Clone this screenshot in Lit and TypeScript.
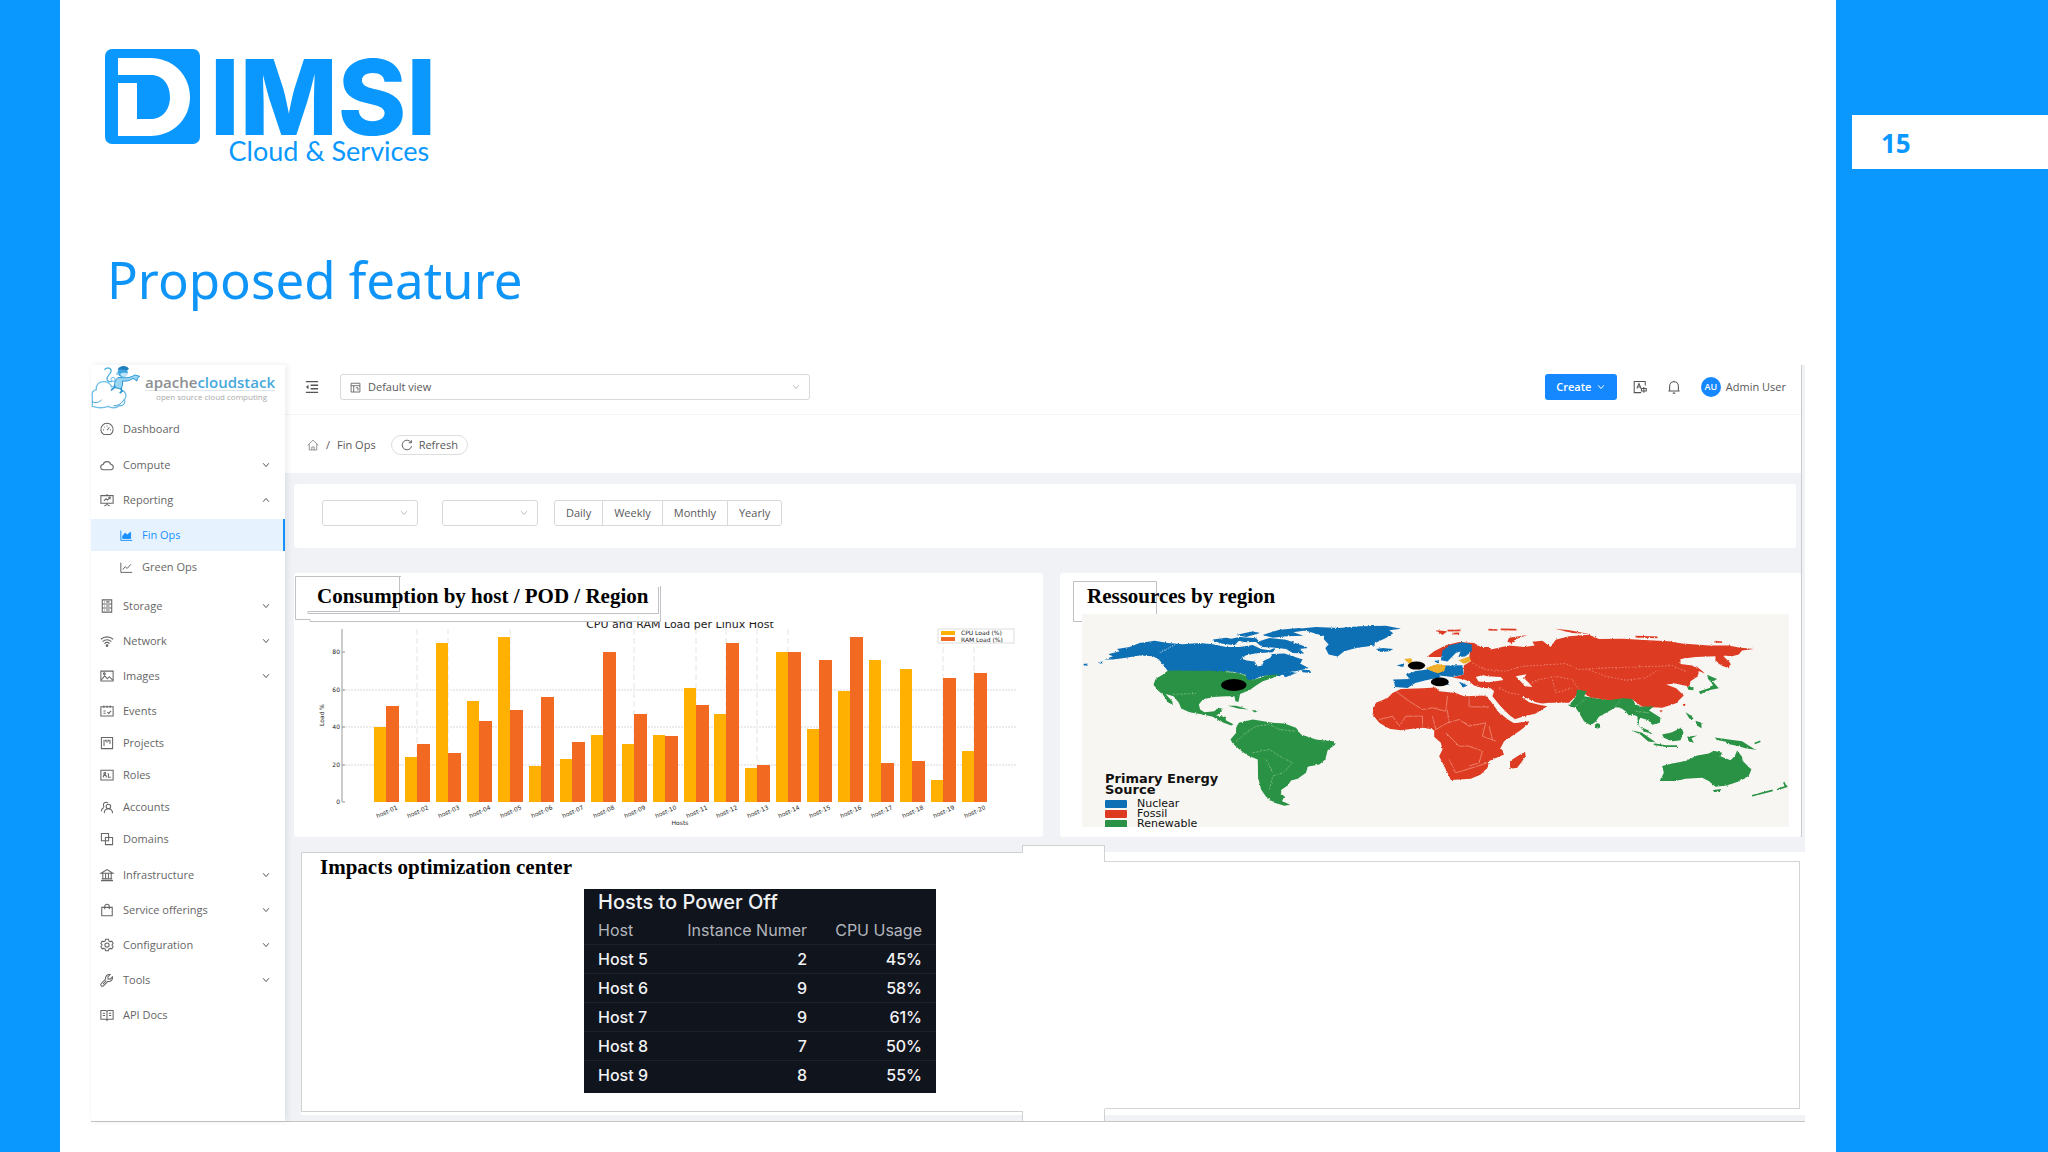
import { LitElement, html, svg, css, nothing } from "lit";
import { customElement, property } from "lit/decorators.js";

/* 16 x 16 outline icons, drawn with currentColor strokes. */
const ICONS: Record<string, unknown> = {
  dashboard: svg`<path d="M4 14.2A7 7 0 1 1 12 14.2Z"/><path d="M8 9.4 10.8 6M3.6 9h1M11.4 9h1M8 4v1M4.9 5.6l.6.6"/>`,
  cloud: svg`<path d="M4 13.4A3 3 0 0 1 3.6 7.4 4.6 4.6 0 0 1 12.4 7.4 3 3 0 0 1 12 13.4Z"/>`,
  reporting: svg`<path d="M1 3h14v8.6H1ZM8 1v2M8 11.6v1.6M5 15l3-2 3 2"/><path d="M4.4 9 7 6.6l1.6 1.4 3-3M9.6 5h2v2"/>`,
  area: svg`<path d="M1 2v12h14"/><path d="M3.4 11.6V8.6L6.4 5l2.4 2.4L13 4v7.6Z" fill="currentColor"/>`,
  line: svg`<path d="M1 2v12h14M3.4 10.6 6.4 7l2.4 2.2L13.4 4"/>`,
  storage: svg`<path d="M2.6 1h10.8v14H2.6ZM2.6 5.6h10.8M2.6 10.2h10.8M7 3.3h4M7 7.9h4M7 12.6h4M4.6 3.3h.8M4.6 7.9h.8M4.6 12.6h.8"/>`,
  network: svg`<path d="M1 6a10.4 10.4 0 0 1 14 0M3 8.6a7.4 7.4 0 0 1 10 0M5 11a4.4 4.4 0 0 1 6 0"/><circle cx="8" cy="13.2" r="1" fill="currentColor"/>`,
  images: svg`<path d="M1 2.4h14v11.4H1Z"/><path d="m1.4 12.4 4-4.6 3 3.4 2.2-2.4 4 3.8"/><circle cx="5" cy="5.4" r="1"/>`,
  events: svg`<path d="M1 3.2h14v10.6H1ZM4.4 1.8v2.8M11.6 1.8v2.8M8 1.8v2.8"/><path d="M4 8h2.4M4 10.6h2.4M8.4 9.2 10 10.8l2.6-3"/>`,
  projects: svg`<path d="M1.6 1.6h12.8v12.8H1.6Z"/><path d="M4.6 4.4v7M8 4.4v3.2M11.4 4.4v4.6M6.4 4.4v2M9.8 4.4v2"/>`,
  roles: svg`<path d="M1 2.6h14v11H1Z"/><path d="M3.8 10.8v-1.4c0-1.6 3.4-1.6 3.4 0v1.4M9.6 6v4.6h2.6"/><circle cx="5.5" cy="6.4" r="1.1"/>`,
  accounts: svg`<path d="M1.4 13c.2-2.4 1.4-3.8 3-4.4M9.2 3.4A3 3 0 1 0 4.8 8"/><circle cx="9.6" cy="7.4" r="2.6"/><path d="M4.8 15c.2-3 2.2-5 4.8-5s4.6 2 4.8 5"/>`,
  domains: svg`<path d="M1.6 1.8h8.2V10H1.6Z"/><path d="M6.2 6.2h8.2v8.2H6.2Z"/>`,
  infra: svg`<path d="M1.2 6 8 1.8 14.8 6ZM1.2 14.4h13.6M2 12.4h12M3.2 6v6.4M6.4 6v6.4M9.6 6v6.4M12.8 6v6.4"/>`,
  bag: svg`<path d="M2 5h12v9.6H2Z"/><path d="M5.4 7V4a2.6 2.6 0 0 1 5.2 0v3"/>`,
  gear: svg`<path d="M6.4 1.4h3.2l.5 1.9 1.5.8 1.9-.5 1.5 2.7L13.6 8l1.4 1.7-1.5 2.7-1.9-.5-1.5.8-.5 1.9H6.4l-.5-1.9-1.5-.8-1.9.5L1 9.7 2.4 8 1 6.3l1.5-2.7 1.9.5 1.5-.8Z"/><circle cx="8" cy="8" r="2.4"/>`,
  tool: svg`<path d="M14.2 4.4 11.6 7 9.2 6.8 9 4.4l2.6-2.6A4.2 4.2 0 0 0 6.4 7L1.4 12a1.8 1.8 0 0 0 2.6 2.6L9 9.6a4.2 4.2 0 0 0 5.2-5.2Z"/><path d="m3.4 12.6 3.8-3.8"/>`,
  docs: svg`<path d="M1 2.8h5.6L8 4l1.4-1.2H15v10H9.6L8 14l-1.6-1.2H1ZM8 4v9.6M3.2 6h2.6M3.2 8.6h2.6M10.2 6h2.6M10.2 8.6h2.6"/>`,
  fold: svg`<path d="M1 1.8h14M6.4 6h8.6M6.4 10h8.6M1 14.2h14" stroke-width="1.5"/><path d="M4 5.4v5.2L1 8Z" fill="currentColor" stroke="none"/>`,
  view: svg`<path d="M1.6 1.8h12.8v12.8H1.6ZM1.6 5.4h12.8M5.4 5.4v9.2M8.6 8.4h3v4"/>`,
  home: svg`<path d="M1 8.4 8 1.6l7 6.8M3 7v7.6h10V7M6.4 14.6v-4h3.2v4"/>`,
  reload: svg`<path d="M13.4 4.6A6.4 6.4 0 1 0 14.2 9.6M13.8 1.6v3.4h-3.4" stroke-width="1.3"/>`,
  lang: svg`<path d="M14 6.4V1.6H1.4v12.8h8M4.4 9.8 6.8 4l2.4 5.8M5.2 8h3.2"/><path d="M12.4 8v6.6M9.6 9.6h5.6v3H9.6Z"/>`,
  bell: svg`<path d="M3 12.6V7a5 5 0 0 1 10 0v5.6M1.6 12.6h12.8M6.6 15h2.8M8 .8V2"/>`,
  down: svg`<path d="m2.4 4.6 5.6 6.6 5.6-6.6" stroke-width="2"/>`,
  up: svg`<path d="m2.4 11.4 5.6-6.6 5.6 6.6" stroke-width="2"/>`,
};

@customElement("line-icon")
export class LineIcon extends LitElement {
  @property() name = "";
  static styles = css`
    :host { display: inline-flex; width: 14px; height: 14px; flex: none; }
    .glyph { width: 100%; height: 100%; fill: none; stroke: currentColor; stroke-width: 1.2; overflow: visible; }
  `;
  render() {
    return html`<svg class="glyph" viewBox="0 0 16 16" aria-hidden="true">${ICONS[this.name]}</svg>`;
  }
}

interface NavEntry {
  label: string;
  icon: string;
  group?: boolean;
  children?: { label: string; icon: string; active?: boolean }[];
}

const NAV: NavEntry[] = [
  { label: "Dashboard", icon: "dashboard" },
  { label: "Compute", icon: "cloud", group: true },
  {
    label: "Reporting", icon: "reporting", group: true,
    children: [
      { label: "Fin Ops", icon: "area", active: true },
      { label: "Green Ops", icon: "line" },
    ],
  },
  { label: "Storage", icon: "storage", group: true },
  { label: "Network", icon: "network", group: true },
  { label: "Images", icon: "images", group: true },
  { label: "Events", icon: "events" },
  { label: "Projects", icon: "projects" },
  { label: "Roles", icon: "roles" },
  { label: "Accounts", icon: "accounts" },
  { label: "Domains", icon: "domains" },
  { label: "Infrastructure", icon: "infra", group: true },
  { label: "Service offerings", icon: "bag", group: true },
  { label: "Configuration", icon: "gear", group: true },
  { label: "Tools", icon: "tool", group: true },
  { label: "API Docs", icon: "docs" },
];

@customElement("side-nav")
export class SideNav extends LitElement {
  static styles = css`
    :host { display: block; background: #fff; font: 11px/16px "Open Sans", sans-serif; color: #666;
      box-shadow: 2px 0 6px rgba(0, 30, 60, 0.09); position: relative; }
    .brand { display: flex; gap: 4px; height: 48px; }
    .mascot { width: 50px; height: 44px; flex: none; }
    .words { display: flex; flex-direction: column; align-items: flex-end; padding-top: 9px; }
    .name { font: 600 15px/16px "Open Sans", sans-serif; color: #8b8f92; border-bottom: 1px solid #dfe5e8; }
    .stack { color: #48a9dc; }
    .motto { font-size: 8px; line-height: 11px; color: #a9a9a9; padding-right: 8px; white-space: nowrap; }
    .list { list-style: none; margin: 0; padding: 0; }
    .item { display: flex; align-items: center; gap: 9px; width: 100%; height: 32px; box-sizing: border-box;
      padding: 0 15px 0 9px; border: 0; background: none; color: inherit; font: inherit; text-align: left;
      text-decoration: none; }
    .group > .item { height: 35px; }
    .leaf + .group, .group + .leaf { margin-top: 2px; }
    .label { flex: 1; }
    .caret { width: 8px; height: 8px; color: #555; }
    .sub { padding: 2px 0 5px; }
    .sub .item { padding-left: 29px; }
    .sub .item.active { background: #e6f3ff; color: #1890ff; border-right: 2px solid #1890ff; }
    .sub line-icon { width: 13px; height: 13px; }
  `;

  private entry(e: NavEntry) {
    if (!e.group) {
      return html`<li class="leaf"><a class="item" href="#"><line-icon name=${e.icon}></line-icon><span class="label">${e.label}</span></a></li>`;
    }
    const open = !!e.children;
    return html`<li class="group">
      <button class="item" type="button" aria-expanded=${open ? "true" : "false"}>
        <line-icon name=${e.icon}></line-icon><span class="label">${e.label}</span>
        <line-icon class="caret" name=${open ? "up" : "down"}></line-icon>
      </button>
      ${e.children
        ? html`<ul class="list sub">${e.children.map((c) => html`<li>
            <a class="item ${c.active ? "active" : ""}" href="#"><line-icon name=${c.icon}></line-icon><span class="label">${c.label}</span></a>
          </li>`)}</ul>`
        : nothing}
    </li>`;
  }

  render() {
    return html`
      <div class="brand">
        <svg class="mascot" viewBox="30 30 150 132" fill="none" aria-hidden="true">
          <path d="M34 122C32 112 38 106 46 104 44 90 54 80 68 80 80 80 88 86 92 96 102 90 118 94 122 106 136 108 138 126 130 134 134 146 126 154 114 152 106 160 90 160 82 154 66 160 46 158 34 154Z" fill="#fff" stroke="#6fbfe8" stroke-width="4"/>
          <path d="M34 140c10 6 22 2 28-6M98 152c16 0 26-8 30-18" stroke="#3f9fd6" stroke-width="3"/>
          <path d="M70 44c8-8 22-6 20 6-2 8-12 12-12 22 0 8 10 10 18 6" stroke="#4fb0e2" stroke-width="4"/>
          <circle cx="96" cy="73" r="6" fill="#fff" stroke="#6cbfe8" stroke-width="3"/>
          <path d="M110 68c-8 8-12 18-8 30l18 4c4-8 6-16 4-24 12 2 24-2 32-8l12 8 1-8 7-6-14-4c-10 6-24 10-34 8Z" fill="#9ad6f4" stroke="#2f97d4" stroke-width="3"/>
          <path d="M104 94l-14 12M118 100l6 8-8 6" stroke="#2f97d4" stroke-width="5"/>
          <circle cx="125" cy="52" r="15" fill="#41a6df"/>
          <path d="M110 44c4-12 26-16 34-2l-6 4c-8-4-18-2-28-2Z" fill="#1f7fbd"/>
          <path d="M118 56c6-4 18-4 22 0-1 7-8 10-13 9-5-1-8-4-9-9Z" fill="#bfe6fa"/>
          <circle cx="109" cy="56" r="4" fill="#8fd0f2"/>
        </svg>
        <div class="words">
          <div class="name">apache<span class="stack">cloudstack</span></div>
          <div class="motto">open source cloud computing</div>
        </div>
      </div>
      <nav aria-label="Main"><ul class="list">${NAV.map((e) => this.entry(e))}</ul></nav>
    `;
  }
}

/* CPU and RAM load of each host, in percent. */
const LOAD: [number, number][] = [
  [40, 51], [24, 31], [85, 26], [54, 43], [88, 49], [19, 56], [23, 32], [36, 80], [31, 47], [36, 35],
  [61, 52], [47, 85], [18, 20], [80, 80], [39, 76], [59, 88], [76, 21], [71, 22], [12, 66], [27, 69],
];

@customElement("load-chart")
export class LoadChart extends LitElement {
  static styles = css`
    :host { display: block; }
    .chart { display: block; width: 100%; height: auto; font-family: "DejaVu Sans", sans-serif; fill: #222; }
    .title { font-size: 11px; text-anchor: middle; }
    .small { font-size: 6px; }
    .end { text-anchor: end; }
    .mid { text-anchor: middle; }
    .cpu { fill: #ffb000; }
    .ram { fill: #f26a21; }
    .axis { stroke: #999; }
    .grid { stroke: #d9d9d9; stroke-dasharray: 2 1; }
    .vgrid { stroke: #e4e4e4; stroke-dasharray: 6 3; }
    .box { fill: #fff; stroke: #ddd; }
  `;
  render() {
    const x = (i: number) => 92 + Math.round(i * 30.95);
    const y = (v: number) => 180 - Math.round(v * 1.873);
    return html`<svg class="chart" viewBox="0 0 749 215" role="img" aria-label="CPU and RAM Load per Linux Host">
      <text class="title" x="386" y="6">CPU and RAM Load per Linux Host</text>
      ${[20, 40, 60].map((v) => svg`<line class="grid" x1="48" x2="722" y1=${y(v)} y2=${y(v)}></line>`)}
      ${[1, 2, 4, 8, 10, 11, 12, 13, 18, 19].map((i) => svg`<line class="vgrid" x1=${x(i)} x2=${x(i)} y1="7" y2="180"></line>`)}
      <line class="axis" x1="48" x2="48" y1="7" y2="180"></line>
      ${[0, 20, 40, 60, 80].map((v) => svg`<line class="axis" x1="48" x2="51" y1=${y(v)} y2=${y(v)}></line>
        <text class="small end" x="46" y=${y(v) + 2}>${v}</text>`)}
      <text class="small mid" transform="translate(30 93) rotate(-90)">Load %</text>
      ${LOAD.map(([cpu, ram], i) => svg`
        <rect class="cpu" x=${x(i) - 12} width="12" y=${y(cpu)} height=${180 - y(cpu)}></rect>
        <rect class="ram" x=${x(i)} width="13" y=${y(ram)} height=${180 - y(ram)}></rect>
        <text class="small end" transform="translate(${x(i) + 12} 187) rotate(-24)">host-${String(i + 1).padStart(2, "0")}</text>`)}
      <text class="small mid" x="386" y="203">Hosts</text>
      <rect class="box" x="644" y="7" width="76" height="14"></rect>
      <rect class="cpu" x="647" y="9" width="14" height="4"></rect>
      <rect class="ram" x="647" y="15" width="14" height="4"></rect>
      <text class="small" x="667" y="13">CPU Load (%)</text>
      <text class="small" x="667" y="20">RAM Load (%)</text>
    </svg>`;
  }
}

@customElement("energy-map")
export class EnergyMap extends LitElement {
  static styles = css`
    :host { display: block; position: relative; background: #f8f6f2; overflow: hidden; }
    .map { display: block; width: 100%; height: auto; }
    .nuclear { fill: #0f6fb4; background: #0f6fb4; }
    .fossil { fill: #dd3a22; background: #dd3a22; }
    .renewable { fill: #2b9245; background: #2b9245; }
    .amber { fill: #eeb02c; }
    .sea { fill: #f8f6f2; }
    .border { fill: none; stroke: #f3a58f; stroke-width: 2; }
    .gborder { fill: none; stroke: #8cc795; stroke-width: 2; stroke-dasharray: 7 4; }
    .thin { fill: none; stroke-width: 5; }
    .gline { stroke: #2b9245; }
    .rline { stroke: #dd3a22; }
    .bline { stroke: #0f6fb4; }
    .legend { position: absolute; left: 23px; bottom: -2px; font: 11px/10px "DejaVu Sans", sans-serif; color: #111; }
    .heading { margin: 0 0 4px; font: bold 13px/11px "DejaVu Sans", sans-serif; }
    .keys { list-style: none; margin: 0; padding: 0; }
    .key { display: flex; align-items: center; gap: 10px; }
    .swatch { width: 22px; height: 8px; border-radius: 1px; }
  `;
  render() {
    return html`
      <svg class="map" viewBox="127 163 2124 640" role="img" aria-label="World map of primary energy source">
        <defs>
          <filter id="coast" x="0" y="0" width="100%" height="100%">
            <feTurbulence type="fractalNoise" baseFrequency="0.16" numOctaves="2" seed="4"></feTurbulence>
            <feDisplacementMap in="SourceGraphic" scale="7" xChannelSelector="R" yChannelSelector="G"></feDisplacementMap>
          </filter>
        </defs>
        <g filter="url(#coast)">
          <g class="nuclear">
            <path d="M195 300 220 290 205 284 240 275 232 268 270 262 300 250 345 243 385 250 430 254 480 250 520 254 560 262 600 262 640 256 665 268 690 272 712 262 700 278 650 281 620 287 605 297 622 303 645 306 655 321 668 318 675 302 692 295 700 283 735 282 760 290 790 300 782 312 808 325 770 335 740 337 720 350 700 346 665 350 640 362 620 362 618 345 560 334 385 334 372 318 358 300 340 290 300 288 255 295 220 300Z"/>
            <path d="M515 240 560 234 600 242 585 257 545 252ZM590 226 640 215 662 220 620 232ZM572 238 600 232 650 236 660 246 620 248ZM650 248 690 235 740 240 785 256 808 265 780 268 795 282 760 280 740 268 700 264 668 262ZM670 226 720 210 780 205 802 212 762 218 792 228 742 230 700 234Z"/>
            <path d="M770 208 830 202 900 205 960 200 1040 198 1085 207 1050 212 1062 221 1040 235 1008 250 1005 258 950 265 915 275 895 291 868 285 858 265 868 255 855 240 850 228 830 222 800 213Z"/>
            <path d="M1010 268 1030 265 1062 268 1050 275 1025 277ZM725 342 748 335 772 340 738 353ZM785 330 812 332 815 340 790 338ZM1072 318 1096 311 1092 322Z"/>
            <path d="M1062 360 1112 358 1100 345 1130 334 1165 330 1200 338 1215 318 1270 317 1274 345 1240 352 1200 348 1215 362 1232 378 1210 372 1190 356 1160 362 1128 370 1105 385 1068 382ZM1258 365 1285 378 1272 384ZM1185 305 1200 301 1198 312Z"/>
          </g>
          <g class="renewable">
            <path d="M385 333 560 334 618 345 622 358 640 362 680 348 720 343 700 355 670 365 650 378 630 392 602 403 597 427 588 425 585 410 560 410 520 412 490 420 478 435 482 450 495 458 525 455 535 445 550 448 542 460 530 468 557 472 560 483 582 494 575 498 545 487 520 472 490 465 450 458 425 447 418 430 402 410 378 403 398 425 400 436 385 428 370 405 355 393 342 375 348 358 370 345Z"/>
            <path d="M565 439 590 439 627 450 600 448ZM636 452 658 453 646 459ZM598 490 640 480 700 490 735 492 770 505 785 525 830 540 880 545 888 555 865 572 858 600 840 615 805 622 800 640 775 658 755 663 745 678 727 690 724 705 736 710 728 725 752 736 735 739 705 730 680 712 665 690 656 655 655 600 625 588 600 570 580 552 573 540 590 520 590 505Z"/>
          </g>
          <g class="fossil">
            <path d="M1002 450 1010 430 1045 415 1060 400 1085 388 1150 386 1190 384 1200 395 1250 400 1275 410 1340 408 1355 425 1380 460 1410 482 1425 491 1472 485 1460 500 1440 515 1395 545 1385 565 1395 585 1350 605 1345 625 1325 645 1295 658 1235 662 1225 640 1205 600 1200 590 1210 570 1205 550 1185 532 1185 510 1150 505 1120 508 1085 512 1050 508 1020 490 1000 465Z"/>
            <path d="M1458 577 1460 590 1435 625 1413 628 1413 605 1435 590Z"/>
            <path d="M1163 292 1185 275 1220 257 1260 247 1305 250 1325 262 1350 262 1355 270 1410 258 1455 262 1487 258 1480 246 1510 243 1535 262 1550 240 1590 230 1650 225 1680 238 1750 237 1830 242 1890 245 1930 252 2010 258 2070 258 2100 264 2145 268 2110 273 2100 285 2080 290 2052 288 2075 310 2070 326 2048 318 2030 305 2030 290 1970 292 1925 298 1925 313 1960 318 1980 330 1978 350 1955 365 1952 381 1930 376 1910 372 1882 375 1912 386 1935 408 1910 432 1870 445 1810 442 1780 420 1710 422 1655 414 1620 392 1610 410 1590 430 1530 430 1510 432 1490 428 1455 412 1448 412 1470 428 1500 436 1525 440 1490 462 1455 470 1425 480 1405 462 1380 435 1360 410 1365 395 1355 386 1330 385 1305 378 1290 365 1275 360 1240 354 1274 345 1274 318 1295 305 1290 296 1295 260 1265 252 1225 265 1205 292Z"/>
            <path d="M1405 246 1410 234 1465 226 1432 238 1420 251ZM1190 212 1225 215 1210 226ZM1548 207 1592 212 1650 223 1600 220ZM1970 318 1992 336 1998 342 1980 334ZM1930 434 1940 433 1938 442ZM1862 453 1872 452 1866 459Z"/>
          </g>
          <path class="sea" d="M1310 352 1330 346 1345 350 1385 352 1394 361 1350 368 1318 366ZM1430 350 1462 344 1455 356 1470 370 1480 382 1458 380 1445 366ZM1345 408 1360 412 1382 440 1412 468 1430 480 1415 480 1380 455Z"/>
          <g class="nuclear"><path d="M1205 302 1210 272 1230 258 1270 248 1298 255 1298 276 1278 291 1258 292 1264 276 1250 280 1238 292 1225 306Z"/></g>
          <path class="amber" d="M1095 298 1116 296 1122 312 1108 311ZM1160 325 1195 313 1220 318 1215 335 1195 341 1172 332ZM1258 302 1290 291 1296 304 1275 313Z"/>
          <g class="renewable">
            <path d="M1615 390 1642 395 1636 410 1670 416 1710 422 1750 416 1780 418 1790 435 1810 442 1845 441 1830 452 1865 475 1863 490 1840 496 1828 482 1805 475 1800 482 1800 500 1828 512 1842 525 1815 515 1798 495 1795 470 1780 465 1770 468 1760 455 1745 445 1730 443 1710 455 1680 472 1670 487 1655 497 1635 485 1620 460 1610 445 1588 440 1610 412Z"/>
            <circle cx="1676" cy="499" r="8"/>
            <path d="M1778 512 1810 520 1850 548 1828 546 1805 526ZM1870 525 1900 518 1928 504 1934 520 1925 542 1900 545 1875 535ZM1945 532 1975 528 1958 536 1965 550 1950 546ZM1940 458 1956 468 1966 480 1952 478ZM1970 484 1988 490 1988 506 1974 498ZM2005 345 2015 350 2035 358 2022 366 2040 386 2010 392 1985 404 1980 396 2010 386 2022 374 2008 358ZM1945 380 1965 384 1962 392 1948 390ZM2028 534 2070 540 2110 545 2150 571 2120 566 2100 560 2065 553 2060 546 2035 542Z"/>
            <path d="M1870 620 1900 612 1940 605 1975 588 2010 582 2025 574 2050 580 2045 590 2075 602 2088 590 2095 573 2110 592 2112 605 2138 630 2130 650 2095 668 2065 678 2030 682 2010 665 1990 655 1940 658 1910 665 1863 665 1875 640ZM2022 692 2048 689 2042 697 2026 698Z"/>
          </g>
          <path class="thin gline" d="M1845 554 1880 560 1915 560M2140 709 2202 693M2215 690 2246 680M2235 668 2242 682M2148 552 2165 545"/>
          <path class="thin rline" d="M1348 210 1375 211M1385 209 1432 210M1790 231 1856 233M2030 246 2050 248M1225 213 1264 212M1240 222 1260 221"/>
          <path class="thin bline" d="M132 315 145 315M180 310 190 308"/>
          <path class="gborder" d="M590 545 620 520 650 500 690 495 720 510 770 515M640 580 690 570 720 590 760 610 730 640 700 650 690 690M680 600 700 640M400 404 470 402M1610 440 1640 420M1730 440 1745 420M1790 455 1830 460"/>
          <path class="border" d="M1070 395 1110 425 1150 450 1180 445 1220 455 1225 410M1290 410 1290 442 1350 442M1020 480 1060 470 1080 500 1100 470 1150 470 1150 500M1180 470 1190 510 1225 490 1260 480 1290 500 1340 490M1225 455 1230 490M1340 490 1330 530 1370 545M1220 520 1260 560 1290 560 1330 575 1320 610 1290 620M1230 600 1250 640 1300 625 1345 610M1350 500 1360 540"/>
          <path class="border" stroke-dasharray="5 5" d="M1300 310 1340 330 1400 335 1450 320 1530 315 1580 312 1620 330 1700 325 1790 322 1860 320 1900 318 1940 335M1650 330 1700 350 1760 362 1820 355 1860 330M1460 380 1500 360 1550 350 1600 360 1620 390M1540 360 1550 400 1600 385M1380 385 1410 400 1440 405"/>
          <path fill="none" stroke="#dfe8ef" stroke-width="2" stroke-dasharray="4 3" d="M360 280 410 253M560 337 600 340 620 350"/>
        </g>
        <ellipse cx="583" cy="376" rx="38" ry="18"></ellipse>
        <ellipse cx="1132" cy="318" rx="26" ry="12"></ellipse>
        <ellipse cx="1202" cy="367" rx="27" ry="13"></ellipse>
      </svg>
      <div class="legend">
        <p class="heading">Primary Energy<br />Source</p>
        <ul class="keys">
          <li class="key"><span class="swatch nuclear"></span>Nuclear</li>
          <li class="key"><span class="swatch fossil"></span>Fossil</li>
          <li class="key"><span class="swatch renewable"></span>Renewable</li>
        </ul>
      </div>`;
  }
}

const HOSTS: [string, number, string][] = [
  ["Host 5", 2, "45%"], ["Host 6", 9, "58%"], ["Host 7", 9, "61%"], ["Host 8", 7, "50%"], ["Host 9", 8, "55%"],
];

@customElement("host-table")
export class HostTable extends LitElement {
  static styles = css`
    :host { display: block; width: 352px; box-sizing: border-box; padding-bottom: 4px; background: #10141d;
      color: #f1f2f4; font: 16px/28px Inter, sans-serif; }
    .hosts { width: 100%; border-collapse: collapse; }
    .caption { text-align: left; padding: 0 14px; font: 500 20px/27px Inter, sans-serif; }
    .cell { padding: 0 0 0 14px; text-align: left; font-weight: 500; border-top: 1px solid #1c222c; height: 28px; }
    .cell.num { text-align: right; padding: 0 14px 0 0; }
    .cell.last { width: 101px; }
    .cell.head { color: #b3b6bc; font-weight: 400; border-top: 0; }
  `;
  render() {
    return html`<table class="hosts">
      <caption class="caption">Hosts to Power Off</caption>
      <thead><tr>
        <th class="cell head" scope="col">Host</th>
        <th class="cell head num" scope="col">Instance Numer</th>
        <th class="cell head num last" scope="col">CPU Usage</th>
      </tr></thead>
      <tbody>${HOSTS.map(([h, n, c]) => html`<tr>
        <td class="cell">${h}</td><td class="cell num">${n}</td><td class="cell num">${c}</td>
      </tr>`)}</tbody>
    </table>`;
  }
}

@customElement("app-root")
export class AppRoot extends LitElement {
  static styles = css`
    :host { display: block; font: 11px/16px "Open Sans", sans-serif; color: #595959; }
    .slide { display: flex; min-height: 100vh; background: #fff; }
    .edge { width: 60px; flex: none; background: #0a98ff; }
    .right { width: 212px; flex: none; background: #0a98ff; padding-top: 115px; box-sizing: border-box; }
    .page { margin-left: 16px; padding: 2px 0 0 29px; background: #fff; color: #0a98ff;
      font: bold 26px/52px "Noto Sans", sans-serif; }
    .main { flex: 1; min-width: 0; padding: 49px 31px 30px; }

    .logo { display: flex; gap: 10px; height: 120px; padding-left: 14px; color: #0a98ff; }
    .mark { width: 95px; height: 95px; }
    .wordmark { display: flex; flex-direction: column; align-items: flex-end; padding-top: 4px; }
    .big { font: 800 104px/88px Inter, sans-serif; }
    .tagline { font: 27px/20px Lato, sans-serif; padding-right: 7px; }
    .title { margin: 80px 0 56px 16px; font: 51px/60px "Noto Sans", sans-serif; color: #0f95f7; }

    .shot { display: grid; grid-template-columns: 194px 1fr; border-bottom: 1px solid #c4c6c8; }
    .body { min-width: 0; background: #f0f2f5; }
    .upper { margin-right: 3px; border-right: 1px solid #c9cbcf; }
    .top { display: flex; align-items: center; height: 44px; padding: 0 15px 5px 20px; background: #fff;
      border-bottom: 1px solid #f3f3f3; }
    .flat { display: inline-flex; padding: 0; border: 0; background: none; color: #555; }
    .picker { display: flex; position: relative; align-items: center; }
    .select { appearance: none; width: 96px; height: 26px; box-sizing: border-box; border: 1px solid #d9d9d9;
      border-radius: 3px; background: #fff; color: #595959; font: inherit; }
    .view { width: 470px; margin-left: 21px; }
    .view .select { width: 100%; padding-left: 27px; }
    .lead { position: absolute; left: 10px; width: 11px; height: 11px; pointer-events: none; }
    .drop { position: absolute; right: 10px; width: 8px; height: 8px; color: #bbb; pointer-events: none; }
    .actions { display: flex; align-items: center; margin-left: auto; gap: 20px; }
    .create { display: flex; align-items: center; justify-content: center; gap: 6px; width: 72px; height: 26px;
      padding: 0; border: 0; border-radius: 3px; background: #1588ff; color: #fff; font: 600 11px/16px "Open Sans", sans-serif; margin-right: -4px; }
    .tiny { width: 8px; height: 8px; }
    .user { display: flex; align-items: center; gap: 5px; color: inherit; text-decoration: none; }
    .avatar { width: 20px; border-radius: 50%; background: #1588ff; color: #fff; text-align: center;
      font: 600 9px/20px "Open Sans", sans-serif; }
    .crumbs { display: flex; align-items: center; height: 56px; padding: 2px 0 0 22px; gap: 7px; background: #fff; }
    .crumbs .here { margin-right: 8px; }
    .crumbs line-icon { width: 12px; height: 12px; }
    .homelink { display: inline-flex; color: #888; }
    .refresh { display: flex; align-items: center; gap: 6px; height: 20px; padding: 0 9px; border: 1px solid #ddd;
      border-radius: 10px; background: #fff; color: #595959; font: inherit; }
    .filters { display: flex; align-items: center; gap: 24px; height: 64px; margin: 11px 5px 25px 9px; padding: 0 28px;
      box-sizing: border-box; background: #fff; border-radius: 3px; padding-bottom: 7px; }
    .periods { display: flex; margin-left: -8px; }
    .period { height: 26px; padding: 0 11px; margin-right: -1px; border: 1px solid #d9d9d9; background: #fff;
      color: #595959; font: inherit; }
    .period:first-child { border-radius: 3px 0 0 3px; }
    .period:last-child { border-radius: 0 3px 3px 0; }
    .cards { display: grid; grid-template-columns: 749fr 741fr; gap: 17px; padding-left: 9px; }
    .card { position: relative; height: 264px; box-sizing: border-box; background: #fff; border-radius: 3px; overflow: hidden; }
    .outline { position: absolute; left: 1px; top: 0; width: 400px; height: 60px; fill: none; stroke: #bfc1c4; }
    .heading { position: relative; margin: 0; padding-left: 23px; color: #000;
      font: bold 21px/24px "Liberation Serif", serif; }
    .card .heading { padding-top: 11px; }
    .plot { margin-top: 14px; }
    .world { margin: 6px 12px 0 22px; }
    .regions .heading { padding-left: 27px; }

    .lower { display: grid; grid-template-columns: 721fr 83px 695fr; padding: 8px 5px 0 16px; }
    .impact { margin: 7px 0 9px; border: 1px solid #cfd1d3; border-right: 0; background: #fff; height: 260px; padding-top: 2px;
      box-sizing: border-box; box-shadow: 0 3px #fff; }
    .impact .heading { padding-left: 18px; margin-bottom: 10px; }
    .hostbox { margin-left: 282px; }
    .bridge { border-top: 1px solid #cfd1d3; background:
      linear-gradient(#cfd1d3, #cfd1d3) 0 0 / 1px 7px no-repeat,
      linear-gradient(#cfd1d3, #cfd1d3) 0 100% / 1px 10px no-repeat,
      linear-gradient(#cfd1d3, #cfd1d3) 100% 0 / 1px 16px no-repeat,
      linear-gradient(#cfd1d3, #cfd1d3) 100% 100% / 1px 12px no-repeat, #fff; }
    .rest { margin: 7px 0 6px; padding: 9px 0 6px; background: #fff; box-shadow: 5px 0 #fff; }
    .restbox { height: 100%; box-sizing: border-box; border: 1px solid #d3d5d7; border-left: 0; }
  `;

  render() {
    return html`
      <div class="slide">
        <div class="edge"></div>
        <main class="main">
          <div class="logo">
            <svg class="mark" viewBox="0 0 95 95" aria-hidden="true">
              <rect width="95" height="95" rx="7" fill="#0a98ff"></rect>
              <path fill="#fff" d="M13 9H45C68 9 85 26 85 48S68 87 45 87H13V34H32V70H46C58 70 65 60 65 48S58 26 46 26H13Z"></path>
            </svg>
            <div class="wordmark"><div class="big">IMSI</div><div class="tagline">Cloud &amp; Services</div></div>
          </div>
          <h1 class="title">Proposed feature</h1>
          <div class="shot">
            <side-nav></side-nav>
            <div class="body">
              <div class="upper">
                <div class="top">
                  <button class="flat" type="button" aria-label="Collapse menu"><line-icon name="fold"></line-icon></button>
                  <div class="picker view">
                    <line-icon class="lead" name="view"></line-icon>
                    <select class="select" aria-label="View"><option>Default view</option></select>
                    <line-icon class="drop" name="down"></line-icon>
                  </div>
                  <div class="actions">
                    <button class="create" type="button">Create <line-icon class="tiny" name="down"></line-icon></button>
                    <button class="flat" type="button" aria-label="Language"><line-icon name="lang"></line-icon></button>
                    <button class="flat" type="button" aria-label="Notifications"><line-icon name="bell"></line-icon></button>
                    <a class="user" href="#"><span class="avatar">AU</span>Admin User</a>
                  </div>
                </div>
                <div class="crumbs">
                  <a class="homelink" href="#" aria-label="Home"><line-icon name="home"></line-icon></a>
                  <span>/</span><span class="here">Fin Ops</span>
                  <button class="refresh" type="button"><line-icon name="reload"></line-icon>Refresh</button>
                </div>
                <div class="filters">
                  ${["Zone", "Host"].map((n) => html`<div class="picker">
                    <select class="select" aria-label=${n}><option></option></select>
                    <line-icon class="drop" name="down"></line-icon>
                  </div>`)}
                  <div class="periods">
                    ${["Daily", "Weekly", "Monthly", "Yearly"].map((p) => html`<button class="period" type="button">${p}</button>`)}
                  </div>
                </div>
                <div class="cards">
                  <section class="card">
                    <svg class="outline" viewBox="0 0 400 60" aria-hidden="true">
                      <path d="M106 3.500H.5V46.500H15V48.500H365.500V13M104.500 3.500V38.500H13V40.500H363.500V14"></path>
                    </svg>
                    <h2 class="heading">Consumption by host / POD / Region</h2>
                    <load-chart class="plot"></load-chart>
                  </section>
                  <section class="card regions">
                    <svg class="outline" viewBox="0 0 400 60" aria-hidden="true">
                      <path d="M22 48.500H12.500V8.500H95.500V41.500H22.500V48"></path>
                    </svg>
                    <h2 class="heading">Ressources by region</h2>
                    <energy-map class="world"></energy-map>
                  </section>
                </div>
              </div>
              <div class="lower">
                <section class="impact">
                  <h2 class="heading">Impacts optimization center</h2>
                  <host-table class="hostbox"></host-table>
                </section>
                <div class="bridge"></div>
                <div class="rest"><div class="restbox"></div></div>
              </div>
            </div>
          </div>
        </main>
        <aside class="right"><div class="page">15</div></aside>
      </div>
    `;
  }
}
